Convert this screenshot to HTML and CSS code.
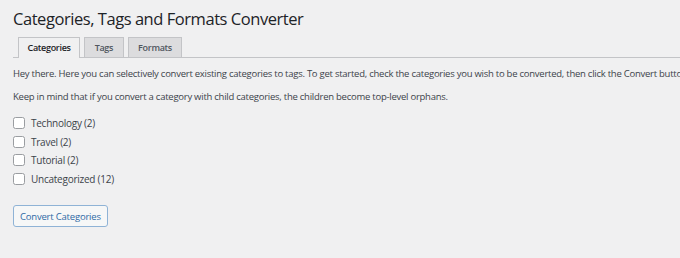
FILE: index.html
```html
<!DOCTYPE html>
<html lang="en">
<head>
    <meta charset="UTF-8">
    <meta name="viewport" content="width=device-width, initial-scale=1.0">
    <title>Categories, Tags and Formats Converter</title>
    <link rel="stylesheet" href="styles.css">
</head>
<body>
    <div class="wrap">
        <h1>Categories, Tags and Formats Converter</h1>

        <div class="tabs">
            <a href="#" class="tab active">Categories</a>
            <a href="#" class="tab">Tags</a>
            <a href="#" class="tab">Formats</a>
        </div>

        <p>Hey there. Here you can selectively convert existing categories to tags. To get started, check the categories you wish to be converted, then click the Convert button.</p>
        <p>Keep in mind that if you convert a category with child categories, the children become top-level orphans.</p>

        <ul class="cats">
            <li><label><input type="checkbox" name="cats[]" value="3">Technology (2)</label></li>
            <li><label><input type="checkbox" name="cats[]" value="4">Travel (2)</label></li>
            <li><label><input type="checkbox" name="cats[]" value="5">Tutorial (2)</label></li>
            <li><label><input type="checkbox" name="cats[]" value="1">Uncategorized (12)</label></li>
        </ul>

        <button type="button" class="button">Convert Categories</button>
    </div>
</body>
</html>
```

FILE: styles.css
```css
html, body {
  margin: 0;
  padding: 0;
  background: #f0f0f1;
  overflow: hidden;
}
body {
  font-family: 'Open Sans', 'Noto Sans', sans-serif;
  font-size: 9.5px;
  letter-spacing: -0.25px;
  color: #3c434a;
}
.wrap {
  padding: 5px 0 0 13px;
}
h1 {
  margin: 0;
  font-size: 16.5px;
  font-weight: 400;
  letter-spacing: -0.45px;
  line-height: 28px;
  color: #1d2327;
}
.tabs {
  display: flex;
  gap: 4px;
  margin-top: 4px;
  padding-left: 5px;
  border-bottom: 1px solid #c3c4c7;
}
.tab {
  display: block;
  padding: 0 9.5px;
  height: 19px;
  line-height: 19px;
  margin-bottom: -1px;
  border: 1px solid #c3c4c7;
  border-bottom: none;
  background: #dcdcde;
  color: #50575e;
  font-weight: 600;
  font-size: 9px;
  letter-spacing: -0.3px;
  text-decoration: none;
}
.tab.active {
  padding: 0 8.5px;
  background: #f0f0f1;
  color: #1d2327;
  height: 20px;
}
p {
  margin: 9px 0 0;
  line-height: 14px;
  white-space: nowrap;
}
p + p {
  margin-top: 9px;
}
.cats {
  list-style: none;
  margin: 10px 0 0;
  padding: 0;
}
.cats li {
  height: 18.5px;
  display: flex;
  align-items: center;
}
.cats label {
  display: flex;
  align-items: center;
  font-size: 10px;
}
.cats input {
  appearance: none;
  margin: 0 6px 0 0;
  width: 12px;
  height: 12px;
  background: #fff;
  border: 1px solid #9a9da1;
  border-radius: 2.5px;
  box-sizing: border-box;
}
.button {
  display: block;
  margin-top: 17px;
  height: 22px;
  padding: 0 6px;
  font-family: inherit;
  font-size: 9.5px;
  letter-spacing: -0.2px;
  color: #2f6aa6;
  background: #f6f7f7;
  border: 1px solid #8fb3d6;
  border-radius: 3px;
  cursor: pointer;
}
```
